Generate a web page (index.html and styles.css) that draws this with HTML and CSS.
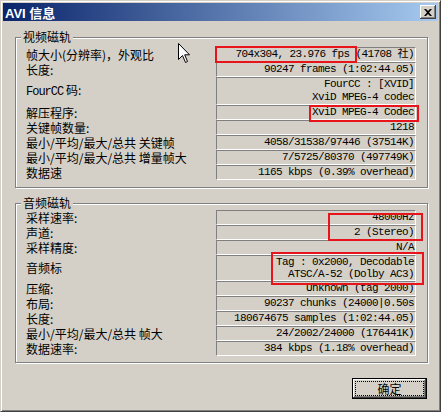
FILE: index.html
```html
<!DOCTYPE html>
<html lang="zh-CN">
<head>
    <meta charset="UTF-8">
    <link rel="stylesheet" href="styles.css">
    <title>AVI 信息</title>
</head>
<body>
    <div class="window">
        <div class="titlebar">
            <span class="title">AVI 信息</span>
            <span class="close">
                <svg width="8" height="7" viewBox="0 0 8 7"><path d="M0 0h2l2 2 2-2h2L5 3.5 8 7H6L4 5 2 7H0l3-3.5z" fill="#000"/></svg>
            </span>
        </div>

        <div class="content">
            <fieldset class="group video">
                <legend>视频磁轨</legend>
                <div class="grid">
                    <div class="label">帧大小(分辨率)，外观比</div>
                    <div class="value">704x304, 23.976 fps (41708 社)</div>

                    <div class="label">长度:</div>
                    <div class="value">90247 frames (1:02:44.05)</div>

                    <div class="label"><span class="latin">FourCC</span> 码:</div>
                    <div class="value">FourCC : [XVID]<br>XviD MPEG-4 codec</div>

                    <div class="label">解压程序:</div>
                    <div class="value">XviD MPEG-4 Codec</div>

                    <div class="label">关键帧数量:</div>
                    <div class="value">1218</div>

                    <div class="label">最小/平均/最大/总共 关键帧</div>
                    <div class="value">4058/31538/97446 (37514K)</div>

                    <div class="label">最小/平均/最大/总共 增量帧大</div>
                    <div class="value">7/5725/80370 (497749K)</div>

                    <div class="label">数据速</div>
                    <div class="value">1165 kbps (0.39% overhead)</div>
                </div>
            </fieldset>

            <fieldset class="group audio">
                <legend>音频磁轨</legend>
                <div class="grid">
                    <div class="label">采样速率:</div>
                    <div class="value">48000Hz</div>

                    <div class="label">声道:</div>
                    <div class="value">2 (Stereo)</div>

                    <div class="label">采样精度:</div>
                    <div class="value">N/A</div>

                    <div class="label">音频标</div>
                    <div class="value tight">Tag : 0x2000, Decodable<br>ATSC/A-52 (Dolby AC3)</div>

                    <div class="label">压缩:</div>
                    <div class="value">Unknown (tag 2000)</div>

                    <div class="label">布局:</div>
                    <div class="value">90237 chunks (24000|0.50s</div>

                    <div class="label">长度:</div>
                    <div class="value">180674675 samples (1:02:44.05)</div>

                    <div class="label">最小/平均/最大/总共 帧大</div>
                    <div class="value">24/2002/24000 (176441K)</div>

                    <div class="label">数据速率:</div>
                    <div class="value">384 kbps (1.18% overhead)</div>
                </div>
            </fieldset>

            <div class="actions">
                <button type="button" class="ok"><span>确定</span></button>
            </div>
        </div>

        <!-- red marks drawn over the dialog -->
        <div class="mark mark-size"></div>
        <div class="mark mark-codec"></div>
        <div class="mark mark-rate"></div>
        <div class="mark mark-tag"></div>

        <svg class="cursor" width="13" height="21" viewBox="0 0 13 21">
            <path d="M0.5 0.5 L0.5 16.5 L4.5 12.5 L7.5 19.5 L9.5 18.5 L6.7 11.8 L11.5 11.8 Z" fill="#fff" stroke="#000" stroke-width="1"/>
        </svg>
    </div>
</body>
</html>
```

FILE: styles.css
```css
body {
    margin: 0;
    font-family: "Noto Sans CJK SC", sans-serif;
    font-size: 12px;
    color: #000;
}

.window {
    position: relative;
    width: 441px;
    height: 412px;
    box-sizing: border-box;
    background-color: #d4d0c8;
    border: 1px solid;
    border-color: #d4d0c8 #404040 #404040 #d4d0c8;
    box-shadow: inset 1px 1px 0 #fff, inset -1px -1px 0 #808080;
    padding: 2px;
}

.titlebar {
    height: 18px;
    display: flex;
    align-items: center;
    justify-content: space-between;
    padding: 0 2px;
    background: linear-gradient(to right, #0a246a, #a6caf0);
}

.title {
    color: #fff;
    font: bold 13px "Liberation Sans", "Noto Sans CJK SC", sans-serif;
}

.close {
    width: 16px;
    height: 14px;
    box-sizing: border-box;
    display: flex;
    align-items: center;
    justify-content: center;
    background-color: #d4d0c8;
    box-shadow: inset -1px -1px 0 #404040, inset 1px 1px 0 #fff, inset -2px -2px 0 #808080;
}

.content {
    padding: 9px 10px 0 12px;
}

.group {
    margin: 0;
    min-width: 0;
    border: 1px solid #808080;
    box-shadow: 1px 1px 0 #fff, inset 1px 1px 0 #fff;
}

.video {
    padding: 3px 11px 7px 10px;
}

.audio {
    margin-top: 8px;
    padding: 0 11px 6px 10px;
}

legend {
    padding: 0 2px;
    margin-left: -5px;
    line-height: 14px;
    background-color: #d4d0c8;
}

.grid {
    display: grid;
    grid-template-columns: 1fr 200px;
}

.label {
    align-self: center;
    line-height: 14px;
    white-space: nowrap;
}

.latin {
    font-family: "Liberation Mono", monospace;
    font-size: 12px;
    letter-spacing: -1px;
}

.value {
    font-family: "Liberation Mono", "Noto Sans CJK SC", monospace;
    font-size: 11px;
    line-height: 13px;
    letter-spacing: -0.6px;
    text-align: right;
    padding-right: 1px;
    white-space: pre;
    overflow: hidden;
    border: 1px solid;
    border-color: #808080 #fff #fff #808080;
}

.value.tight {
    line-height: 12px;
}

.actions {
    display: flex;
    justify-content: flex-end;
    margin-top: 15px;
    margin-right: 1px;
}

.ok {
    width: 75px;
    height: 21px;
    box-sizing: border-box;
    padding: 2px;
    border: 1px solid #000;
    background-color: #d4d0c8;
    box-shadow: inset -1px -1px 0 #404040, inset 1px 1px 0 #fff, inset -2px -2px 0 #808080;
    font-family: "Noto Sans CJK SC", sans-serif;
    font-size: 12px;
    color: #000;
}

.ok span {
    display: block;
    height: 100%;
    box-sizing: border-box;
    border: 1px dotted #000;
    line-height: 13px;
}

.mark {
    position: absolute;
    box-sizing: border-box;
    border: 2px solid #e8141c;
}

.mark-size {
    left: 214px;
    top: 45px;
    width: 142px;
    height: 17px;
}

.mark-codec {
    left: 308px;
    top: 104px;
    width: 110px;
    height: 17px;
}

.mark-rate {
    left: 327px;
    top: 212px;
    width: 95px;
    height: 28px;
}

.mark-tag {
    left: 270px;
    top: 251px;
    width: 153px;
    height: 33px;
}

.cursor {
    position: absolute;
    left: 177px;
    top: 42px;
}
```
